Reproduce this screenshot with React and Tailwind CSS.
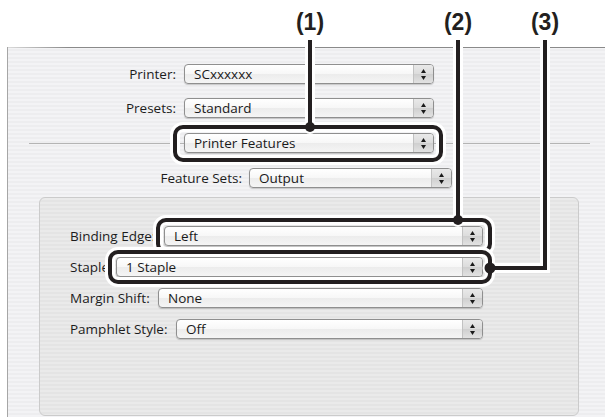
import React from "react";

const Popup = ({ value, className }) => (
  <div
    className={`flex h-[20px] items-stretch rounded-[4px] border border-[#8f8f8f] bg-[linear-gradient(180deg,#ffffff_0%,#f7f7f7_50%,#ececec_51%,#f5f5f5_100%)] shadow-[0_1px_1px_rgba(0,0,0,0.18)] ${className}`}
  >
    <span className="flex flex-1 items-center pl-[9px] whitespace-nowrap text-[#1a1a1a]">{value}</span>
    <span className="flex w-[20px] flex-col items-center justify-center gap-[3px] rounded-r-[3px] border-l border-[#c2c2c2] bg-[linear-gradient(180deg,#e9e9e9_0%,#dcdcdc_50%,#cfcfcf_51%,#e2e2e2_100%)]">
      <svg width="5" height="4" viewBox="0 0 5 4">
        <path d="M2.5 0L5 4H0z" fill="#1a1a1a" />
      </svg>
      <svg width="5" height="4" viewBox="0 0 5 4">
        <path d="M0 0h5L2.5 4z" fill="#1a1a1a" />
      </svg>
    </span>
  </div>
);

const groupRows = [
  { label: "Binding Edge:", value: "Left", w: "w-[94px]" },
  { label: "Staple:", value: "1 Staple", w: "w-[46px]" },
  { label: "Margin Shift:", value: "None", w: "w-[88px]" },
  { label: "Pamphlet Style:", value: "Off", w: "w-[106px]" },
];

const App = () => {
  return (
    <div className="relative h-[417px] w-[605px] overflow-hidden bg-white font-['Open_Sans',sans-serif] text-[13.5px] text-[#1c1c1c]">
      {/* dialog window */}
      <div className="ml-[7px] mt-[47px] h-[370px] w-[620px] border-l border-[#a6a6a6] bg-[repeating-linear-gradient(180deg,#f3f3f5_0px,#f3f3f5_2px,#ededef_2px,#ededef_4px)]">
        <div className="h-px bg-[linear-gradient(90deg,#dadada_0px,#8a8a8a_60px,#8a8a8a_100%)]" />

        <div className="mt-[16px] flex h-[20px] items-center">
          <span className="w-[168px] text-right">Printer:</span>
          <Popup value="SCxxxxxx" className="ml-[8px] w-[250px]" />
        </div>

        <div className="mt-[14px] flex h-[20px] items-center">
          <span className="w-[168px] text-right">Presets:</span>
          <Popup value="Standard" className="ml-[8px] w-[250px]" />
        </div>

        <div className="mt-[15px] flex h-[20px] items-center">
          <div className="ml-[21px] h-px w-[155px] bg-[#b4b4b4]" />
          <Popup value="Printer Features" className="w-[250px]" />
          <div className="h-px w-[156px] bg-[#b4b4b4]" />
        </div>

        <div className="mt-[15px] flex h-[20px] items-center">
          <span className="w-[234px] text-right">Feature Sets:</span>
          <Popup value="Output" className="ml-[7px] w-[203px]" />
        </div>

        <div className="ml-[31px] mt-[9px] h-[219px] w-[540px] rounded-[6px] border border-[#cbcbcb] bg-[repeating-linear-gradient(180deg,#eaeaea_0px,#eaeaea_2px,#e4e4e4_2px,#e4e4e4_4px)] pl-[30px] pt-[28px]">
          <div className="flex w-[413px] flex-col gap-[11px]">
            {groupRows.map((row) => (
              <div key={row.label} className="flex h-[20px] items-center">
                <span className={`${row.w} shrink-0 whitespace-nowrap`}>{row.label}</span>
                <Popup value={row.value} className="flex-1" />
              </div>
            ))}
          </div>
        </div>
      </div>

      {/* callout annotations */}
      <svg
        className="pointer-events-none absolute left-0 top-0"
        width="605"
        height="417"
        viewBox="0 0 605 417"
        fill="none"
        strokeLinejoin="miter"
      >
        <g stroke="#ffffff" strokeWidth="10">
          <path d="M310 40V127" />
          <rect x="175" y="127" width="266" height="33" rx="8" />
        </g>
        <circle cx="310" cy="127" r="7" fill="#ffffff" />
        <g stroke="#231f20" strokeWidth="4">
          <path d="M310 40V127" />
          <rect x="175" y="127" width="266" height="33" rx="8" />
        </g>
        <circle cx="310" cy="127" r="5" fill="#231f20" />

        <g stroke="#ffffff" strokeWidth="10">
          <path d="M458 40V220" />
          <rect x="158" y="220" width="332" height="32" rx="8" />
        </g>
        <circle cx="458" cy="220" r="7" fill="#ffffff" />
        <g stroke="#231f20" strokeWidth="4">
          <path d="M458 40V220" />
          <rect x="158" y="220" width="332" height="32" rx="8" />
        </g>
        <circle cx="458" cy="220" r="5" fill="#231f20" />

        <g stroke="#ffffff" strokeWidth="10">
          <path d="M545 40V268H490" />
          <rect x="110" y="252" width="380" height="30" rx="8" />
        </g>
        <circle cx="490" cy="268" r="7.5" fill="#ffffff" />
        <g stroke="#231f20" strokeWidth="4">
          <path d="M545 40V268H490" />
          <rect x="110" y="252" width="380" height="30" rx="8" />
        </g>
        <circle cx="490" cy="268" r="5.5" fill="#231f20" />
      </svg>

      <div className="absolute left-[290px] top-[9px] w-[40px] text-center font-['Liberation_Sans',Arial,sans-serif] text-[23px] font-bold leading-[26px] text-[#231f20]">
        (1)
      </div>
      <div className="absolute left-[438px] top-[9px] w-[40px] text-center font-['Liberation_Sans',Arial,sans-serif] text-[23px] font-bold leading-[26px] text-[#231f20]">
        (2)
      </div>
      <div className="absolute left-[525px] top-[9px] w-[40px] text-center font-['Liberation_Sans',Arial,sans-serif] text-[23px] font-bold leading-[26px] text-[#231f20]">
        (3)
      </div>
    </div>
  );
};

export default App;
